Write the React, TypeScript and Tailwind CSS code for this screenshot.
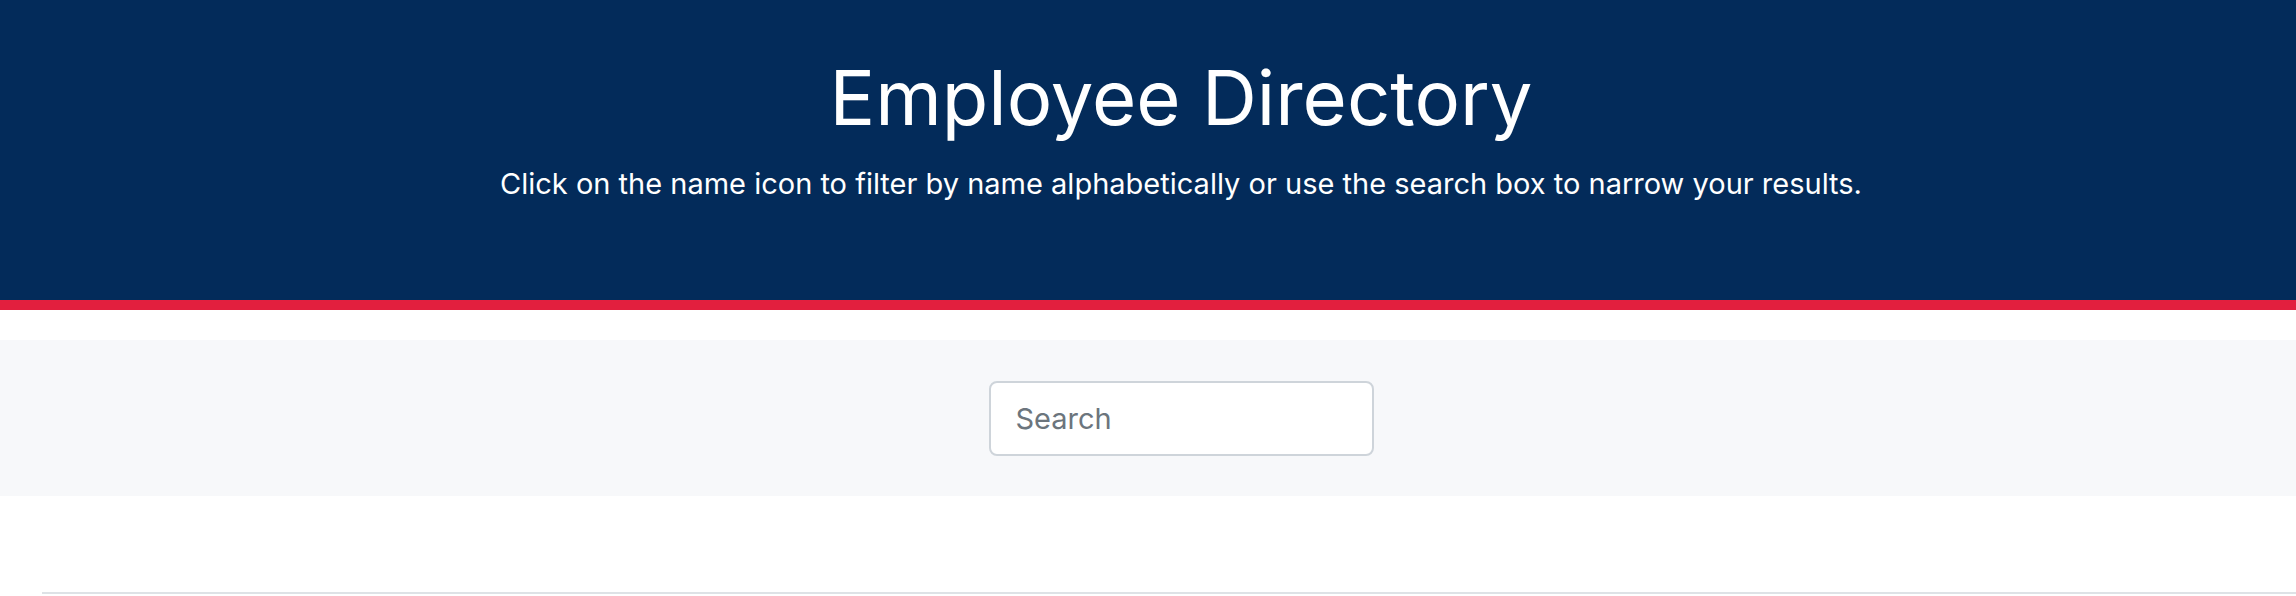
import React from "react";

export default function App() {
  return (
    <div className="w-[2296px] overflow-hidden bg-white" style={{ fontFamily: "Inter, 'Noto Sans', sans-serif" }}>
      <header className="h-[300px] bg-[#032b5a] text-white flex flex-col items-center pl-[66px] pt-[42px]">
        <h1 className="text-[76px] leading-[110px] font-normal">Employee Directory</h1>
        <p className="text-[29px] leading-[40px] mt-[12px]">
          Click on the name icon to filter by name alphabetically or use the search box to narrow your results.
        </p>
      </header>
      <div className="h-[10px] bg-[#e21f3e]" />
      <div className="h-[30px] bg-white" />
      <div className="h-[156px] bg-[#f7f8fa] flex items-center justify-center pl-[66px]">
        <input
          type="text"
          placeholder="Search"
          className="w-[385px] h-[75px] bg-white border-2 border-[#ced4da] rounded-[8px] pl-[25px] text-[29px] text-[#495057] placeholder:text-[#6c757d] outline-none"
        />
      </div>
      <div className="h-[96px]" />
      <div className="ml-[42px] border-t-2 border-[#dee2e6] h-[10px]" />
    </div>
  );
}
